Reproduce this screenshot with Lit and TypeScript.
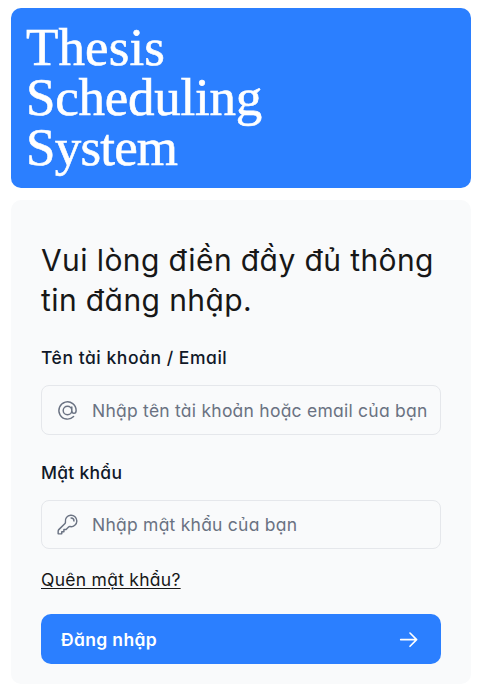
import { LitElement, html, css, svg } from "lit";
import { customElement } from "lit/decorators.js";

const icon = (d: string, kind = "") => html`<svg class="icon ${kind}" viewBox="0 0 24 24" fill="none" stroke="currentColor"
  stroke-linecap="round" stroke-linejoin="round">${svg`<path d=${d}></path>`}</svg>`;

const AT = "M16.5 12a4.5 4.5 0 1 1-9 0 4.5 4.5 0 0 1 9 0Zm0 0c0 1.657 1.007 3 2.25 3S21 13.657 21 12a9 9 0 1 0-2.636 6.364M16.5 12V8.25";
const KEY = "M15.75 5.25a3 3 0 0 1 3 3m3 0a6 6 0 0 1-7.029 5.912c-.563-.097-1.159.026-1.563.43L10.5 17.25H8.25v2.25H6v2.25H2.25v-2.818c0-.597.237-1.17.659-1.591l6.499-6.499c.404-.404.527-1 .43-1.563A6 6 0 1 1 21.75 8.25Z";
const ARROW = "M13.5 4.5 21 12m0 0-7.5 7.5M21 12H3";

@customElement("app-root")
export class AppRoot extends LitElement {
  static styles = css`
    :host {
      display: block;
      box-sizing: border-box;
      width: 485px;
      height: 696px;
      padding: 8px 14px 12px 11px;
      background: #fff;
      font-family: "Inter", "Open Sans", sans-serif;
      font-feature-settings: "cv11";
    }
    * { box-sizing: border-box; }
    .banner {
      height: 180px;
      padding: 14px 15px;
      border-radius: 10px;
      background: #2b7fff;
      color: #fff;
      font: 400 53px/50px "Liberation Serif", serif;
      -webkit-text-stroke: 0.6px #fff;
    }
    .line { display: block; white-space: nowrap; }
    .l1 { letter-spacing: 0.1px; }
    .l2 { letter-spacing: -0.25px; }
    .l3 { letter-spacing: -0.8px; }
    .panel {
      height: 484px;
      margin-top: 12px;
      padding: 40px 30px 20px;
      border-radius: 10px;
      background: #f9fafb;
    }
    h1 {
      margin: 0;
      color: #171717;
      font-size: 30px;
      font-weight: 400;
      line-height: 40px;
      letter-spacing: 0.4px;
    }
    label {
      display: block;
      height: 20px;
      margin-top: 28px;
      color: #101828;
      font-size: 17.5px;
      font-weight: 500;
      line-height: 20px;
      white-space: nowrap;
    }
    .first { letter-spacing: 0.54px; }
    .second { letter-spacing: 0.27px; }
    .field {
      display: flex;
      align-items: center;
      height: 50px;
      margin-top: 17px;
      padding-left: 14px;
      border: 1px solid #e5e7eb;
      border-radius: 8px;
      color: #6a7282;
    }
    .short { height: 49px; }
    .icon { display: block; flex: none; width: 23px; height: 23px; stroke-width: 1.5; }
    .arrow { width: 21.3px; height: 21.3px; margin-right: 1.5px; stroke-width: 1.8; }
    input {
      flex: 1;
      min-width: 0;
      height: 40px;
      margin: 0 0 0 13px;
      padding: 0;
      border: 0;
      outline: 0;
      background: none;
      font: 400 17.5px/24px "Inter", sans-serif;
      font-feature-settings: "cv11";
      letter-spacing: 0.24px;
    }
    input::placeholder { color: #6a7282; opacity: 1; }
    .forgot {
      display: block;
      width: max-content;
      margin-top: 19px;
      color: #171717;
      font-size: 17.5px;
      line-height: 24px;
      letter-spacing: 0.27px;
      text-decoration: underline;
      text-decoration-thickness: 1px;
      text-underline-offset: 2px;
    }
    button {
      display: flex;
      align-items: center;
      justify-content: space-between;
      width: 400px;
      height: 50px;
      margin-top: 22px;
      padding: 1px 20px 0;
      border: 0;
      border-radius: 10px;
      background: #2b7fff;
      color: #fff;
      font: 600 17.5px/24px "Inter", sans-serif;
      font-feature-settings: "cv11";
      letter-spacing: 0.35px;
    }
  `;

  render() {
    return html`
      <header class="banner">
        <span class="line l1">Thesis</span>
        <span class="line l2">Scheduling</span>
        <span class="line l3">System</span>
      </header>
      <main class="panel">
        <h1><span class="line">Vui lòng điền đầy đủ thông</span><span class="line">tin đăng nhập.</span></h1>
        <label class="first" for="account">Tên tài khoản / Email</label>
        <div class="field">${icon(AT)}<input id="account" placeholder="Nhập tên tài khoản hoặc email của bạn"></div>
        <label class="second" for="password">Mật khẩu</label>
        <div class="field short">${icon(KEY)}<input id="password" type="password" placeholder="Nhập mật khẩu của bạn"></div>
        <a class="forgot">Quên mật khẩu?</a>
        <button><span>Đăng nhập</span>${icon(ARROW, "arrow")}</button>
      </main>
    `;
  }
}
